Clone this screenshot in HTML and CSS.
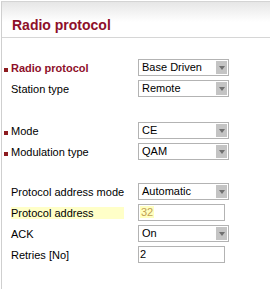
FILE: index.html
```html
<!DOCTYPE html>
<html lang="en">
<head>
<meta charset="UTF-8" />
<title>Radio protocol</title>
<link rel="stylesheet" href="styles.css">
</head>
<body>
<div class="panel">
  <div class="panel-head">
    <h1>Radio protocol</h1>
  </div>

  <form class="settings">
    <div class="group">
      <div class="row req">
        <span class="mark"></span>
        <label class="label strong">Radio protocol</label>
        <div class="select"><span class="select-value">Base Driven</span><span class="select-btn"></span></div>
      </div>
      <div class="row">
        <span class="mark"></span>
        <label class="label">Station type</label>
        <div class="select"><span class="select-value">Remote</span><span class="select-btn"></span></div>
      </div>
    </div>

    <div class="group gap-a">
      <div class="row req">
        <span class="mark"></span>
        <label class="label">Mode</label>
        <div class="select"><span class="select-value">CE</span><span class="select-btn"></span></div>
      </div>
      <div class="row req">
        <span class="mark"></span>
        <label class="label">Modulation type</label>
        <div class="select"><span class="select-value">QAM</span><span class="select-btn"></span></div>
      </div>
    </div>

    <div class="group gap-b">
      <div class="row">
        <span class="mark"></span>
        <label class="label">Protocol address mode</label>
        <div class="select"><span class="select-value">Automatic</span><span class="select-btn"></span></div>
      </div>
      <div class="row">
        <span class="mark"></span>
        <label class="label"><span class="hilite">Protocol address</span></label>
        <div class="input disabled"><span class="input-value">32</span></div>
      </div>
      <div class="row">
        <span class="mark"></span>
        <label class="label">ACK</label>
        <div class="select"><span class="select-value">On</span><span class="select-btn"></span></div>
      </div>
      <div class="row">
        <span class="mark"></span>
        <label class="label">Retries [No]</label>
        <div class="input"><span class="input-value">2</span></div>
      </div>
    </div>
  </form>
</div>
</body>
</html>
```

FILE: styles.css
```css
html, body {
  margin: 0;
  padding: 0;
}
body {
  font-family: "Liberation Sans", Arial, sans-serif;
  font-size: 11px;
  color: #000;
  background: #fff;
  padding: 1px 0 0 1px;
}
.panel {
  border-top: 1px solid #d4d4d4;
  border-left: 1px solid #cfcfcf;
  min-height: 288px;
  box-sizing: border-box;
}
.panel-head {
  background: linear-gradient(#e6e6e6, #fff 20px);
  border-bottom: 1px solid #d6d6d6;
  padding: 15px 0 4px 10px;
}
h1 {
  margin: 0;
  font-size: 14px;
  line-height: 16px;
  font-weight: bold;
  color: #8e0f2a;
}
.settings {
  margin: 0;
  padding-top: 19px;
}
.gap-a {
  margin-top: 21px;
}
.gap-b {
  margin-top: 19px;
}
.row {
  display: flex;
  align-items: center;
  height: 21px;
  padding-left: 2px;
}
.mark {
  width: 4px;
  height: 4px;
  margin: 4px 3px 0 0;
  flex: none;
}
.req .mark {
  background: #8c1a1f;
}
.label {
  width: 127px;
  flex: none;
  line-height: 12px;
}
.label.strong {
  font-weight: bold;
  color: #8e0f2a;
}
.hilite {
  display: inline-block;
  width: 113px;
  background: #ffffc8;
}
.select {
  display: flex;
  width: 91px;
  height: 17px;
  box-sizing: border-box;
  border: 1px solid #b3b3b3;
  background: #fff;
}
.select-value {
  flex: 1;
  padding-left: 3px;
  line-height: 15px;
}
.select-btn {
  width: 11px;
  margin: 1px 1px 1px 0;
  background: #c4c4c4;
  display: flex;
  align-items: center;
  justify-content: center;
}
.select-btn::after {
  content: "";
  border-left: 3px solid transparent;
  border-right: 3px solid transparent;
  border-top: 4px solid #707070;
}
.input {
  width: 87px;
  height: 17px;
  box-sizing: border-box;
  border: 1px solid #b3b3b3;
  background: #fff;
  padding-left: 1px;
  line-height: 15px;
}
.input.disabled .input-value {
  color: #bfa055;
  background: #ffffc0;
  padding: 0 1px;
}
```
